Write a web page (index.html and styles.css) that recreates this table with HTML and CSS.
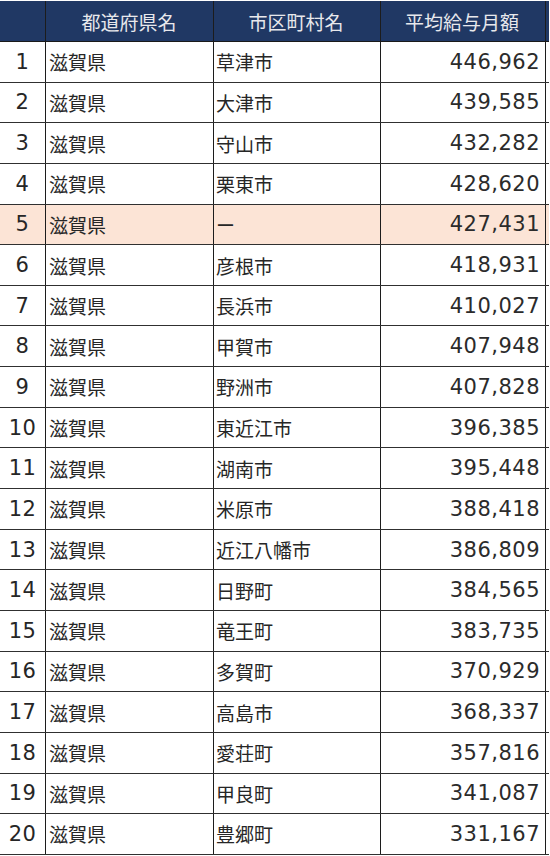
FILE: index.html
```html
<!DOCTYPE html>
<html lang="ja">
<head>
<meta charset="utf-8">
<link rel="stylesheet" href="styles.css">
</head>
<body>
<div class="table">
  <div class="row head">
    <div class="c rank"></div>
    <div class="c center">都道府県名</div>
    <div class="c center">市区町村名</div>
    <div class="c center">平均給与月額</div>
  </div>
  <div class="row"><div class="c rank">1</div><div class="c">滋賀県</div><div class="c">草津市</div><div class="c num">446,962</div></div>
  <div class="row"><div class="c rank">2</div><div class="c">滋賀県</div><div class="c">大津市</div><div class="c num">439,585</div></div>
  <div class="row"><div class="c rank">3</div><div class="c">滋賀県</div><div class="c">守山市</div><div class="c num">432,282</div></div>
  <div class="row"><div class="c rank">4</div><div class="c">滋賀県</div><div class="c">栗東市</div><div class="c num">428,620</div></div>
  <div class="row hl"><div class="c rank">5</div><div class="c">滋賀県</div><div class="c">ー</div><div class="c num">427,431</div></div>
  <div class="row"><div class="c rank">6</div><div class="c">滋賀県</div><div class="c">彦根市</div><div class="c num">418,931</div></div>
  <div class="row"><div class="c rank">7</div><div class="c">滋賀県</div><div class="c">長浜市</div><div class="c num">410,027</div></div>
  <div class="row"><div class="c rank">8</div><div class="c">滋賀県</div><div class="c">甲賀市</div><div class="c num">407,948</div></div>
  <div class="row"><div class="c rank">9</div><div class="c">滋賀県</div><div class="c">野洲市</div><div class="c num">407,828</div></div>
  <div class="row"><div class="c rank">10</div><div class="c">滋賀県</div><div class="c">東近江市</div><div class="c num">396,385</div></div>
  <div class="row"><div class="c rank">11</div><div class="c">滋賀県</div><div class="c">湖南市</div><div class="c num">395,448</div></div>
  <div class="row"><div class="c rank">12</div><div class="c">滋賀県</div><div class="c">米原市</div><div class="c num">388,418</div></div>
  <div class="row"><div class="c rank">13</div><div class="c">滋賀県</div><div class="c">近江八幡市</div><div class="c num">386,809</div></div>
  <div class="row"><div class="c rank">14</div><div class="c">滋賀県</div><div class="c">日野町</div><div class="c num">384,565</div></div>
  <div class="row"><div class="c rank">15</div><div class="c">滋賀県</div><div class="c">竜王町</div><div class="c num">383,735</div></div>
  <div class="row"><div class="c rank">16</div><div class="c">滋賀県</div><div class="c">多賀町</div><div class="c num">370,929</div></div>
  <div class="row"><div class="c rank">17</div><div class="c">滋賀県</div><div class="c">高島市</div><div class="c num">368,337</div></div>
  <div class="row"><div class="c rank">18</div><div class="c">滋賀県</div><div class="c">愛荘町</div><div class="c num">357,816</div></div>
  <div class="row"><div class="c rank">19</div><div class="c">滋賀県</div><div class="c">甲良町</div><div class="c num">341,087</div></div>
  <div class="row"><div class="c rank">20</div><div class="c">滋賀県</div><div class="c">豊郷町</div><div class="c num">331,167</div></div>
</div>
</body>
</html>
```
FILE: styles.css
```css
html, body {
  margin: 0;
  padding: 0;
  background: #ffffff;
}
body {
  font-family: "DejaVu Sans", "Noto Sans CJK JP", sans-serif;
  color: #262626;
}
.table {
  width: 549px;
  padding-top: 1px;
  display: flex;
  flex-direction: column;
}
.row {
  display: grid;
  grid-template-columns: 45px 167px 167px 166px;
  column-gap: 0;
  height: 40.65px;
  box-sizing: border-box;
  border-bottom: 1px solid #303030;
}
.row.head {
  height: 41px;
  background: #203864;
  color: #e8e8ec;
  border-bottom: 1px solid #1a1a1a;
}
.row.hl {
  background: #fce4d6;
}
.c {
  display: flex;
  align-items: center;
  font-size: 19px;
  padding: 0 5px;
  border-right: 1px solid #1c1c1c;
  box-sizing: content-box;
  white-space: nowrap;
  overflow: hidden;
}
.row .c:first-child {
  padding: 0;
  width: 45px;
}
.row .c:nth-child(2),
.row .c:nth-child(3) {
  padding: 0 0 0 4px;
  width: 164px;
}
.row .c:nth-child(4) {
  padding: 0 5px 0 0;
  width: 161px;
}
.rank {
  justify-content: center;
  font-size: 21px;
  letter-spacing: 0.5px;
}
.center {
  justify-content: center;
}
.row .c.center {
  padding: 0;
  width: 168px;
}
.row .c.center:nth-child(4) {
  width: 166px;
}
.num {
  justify-content: flex-end;
  font-size: 21px;
  letter-spacing: 0.5px;
  color: #2b2b2b;
}
```
